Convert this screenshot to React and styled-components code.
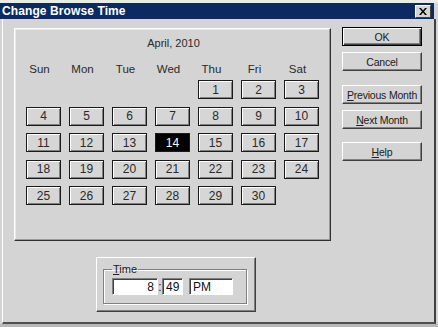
import React from 'react';
import styled, { createGlobalStyle } from 'styled-components';

// Change Browse Time dialog (Win classic look)

const Global = createGlobalStyle`
  html, body {
    margin: 0;
    padding: 0;
    background: #d4d4d4;
  }
  body {
    font-family: "Liberation Sans", Arial, sans-serif;
  }
`;

const days = Array.from({ length: 30 }, (_, i) => i + 1);
const heads = ['Sun', 'Mon', 'Tue', 'Wed', 'Thu', 'Fri', 'Sat'];

const App = () => {
  return (
    <React.Fragment>
      <Global />
      <Window>
        <TopStrip />
        <TitleBar>
          <Title>Change Browse Time</Title>
          <CloseBtn>
            <svg width="8" height="7" viewBox="0 0 8 7">
              <path d="M0 0h2l2 2.5L6 0h2L5 3.5 8 7H6L4 4.5 2 7H0l3-3.5z" fill="#000" />
            </svg>
          </CloseBtn>
        </TitleBar>
        <Body>
          <LeftCol>
            <CalPanel>
              <Month>April, 2010</Month>
              <HeadRow>
                {heads.map((h) => (
                  <Head key={h}>{h}</Head>
                ))}
              </HeadRow>
              <DayGrid>
                {days.map((d) => (
                  <DayBtn key={d} $first={d === 1} $selected={d === 14}>
                    {d}
                  </DayBtn>
                ))}
              </DayGrid>
            </CalPanel>
            <TimeOuter>
              <TimeGroup>
                <TimeLegend>
                  <u>T</u>ime
                </TimeLegend>
                <FieldRow>
                  <Field $w={46} $right>8</Field>
                  <Colon>:</Colon>
                  <Field $w={21}>49</Field>
                  <Field $w={44} $ml={6}>PM</Field>
                </FieldRow>
              </TimeGroup>
            </TimeOuter>
          </LeftCol>
          <RightCol>
            <SideBtn $default>OK</SideBtn>
            <SideBtn $mt={6}>Cancel</SideBtn>
            <SideBtn $mt={14}>
              <u>P</u>revious Month
            </SideBtn>
            <SideBtn $mt={6}>
              <u>N</u>ext Month
            </SideBtn>
            <SideBtn $mt={13}>
              <u>H</u>elp
            </SideBtn>
          </RightCol>
        </Body>
        <BottomStrip />
      </Window>
    </React.Fragment>
  );
};

const Window = styled.div`
  width: 438px;
  height: 327px;
  background: #d4d4d4;
  display: flex;
  flex-direction: column;
  overflow: hidden;
`;

const TopStrip = styled.div`
  height: 3px;
  background: #ecebe6;
`;

const TitleBar = styled.div`
  height: 16px;
  width: 434px;
  background: #0b2a62;
  display: flex;
  align-items: center;
  justify-content: space-between;
`;

const Title = styled.div`
  color: #fff;
  font-weight: bold;
  font-size: 12px;
  padding-left: 2px;
  letter-spacing: 0.1px;
`;

const CloseBtn = styled.div`
  width: 14px;
  height: 11px;
  margin-right: 3px;
  background: #d4d4d4;
  border: 1px solid;
  border-color: #fff #404040 #404040 #fff;
  display: flex;
  align-items: center;
  justify-content: center;
`;

const Body = styled.div`
  flex: 1;
  display: flex;
  align-items: flex-start;
  border-left: 1px solid #fff;
  margin-left: 2px;
  border-right: 2px solid #404040;
  width: 431px;
  border-bottom: 2px solid #505050;
`;

const LeftCol = styled.div`
  padding: 9px 0 0 11px;
  display: flex;
  flex-direction: column;
  align-items: flex-start;
`;

const CalPanel = styled.div`
  border: 1px solid;
  border-color: #fff #303030 #303030 #fff;
  box-shadow: inset -1px -1px #9a9a9a, inset 1px 1px #e8e8e8;
  padding: 8px 0 0 11px;
  box-sizing: border-box;
  width: 317px;
  height: 213px;
  color: #2a2a2a;
`;

const Month = styled.div`
  font-size: 11px;
  line-height: 13px;
  width: 295px;
  text-align: center;
`;

const HeadRow = styled.div`
  display: grid;
  grid-template-columns: repeat(7, 35px);
  column-gap: 8px;
  margin-top: 12px;
`;

const Head = styled.div`
  font-size: 11.5px;
  line-height: 14px;
  text-align: center;
  padding-right: 8px;
  white-space: nowrap;
`;

const DayGrid = styled.div`
  display: grid;
  grid-template-columns: repeat(7, 35px);
  grid-auto-rows: 19px;
  column-gap: 8px;
  row-gap: 7.5px;
  margin-top: 4px;
`;

const DayBtn = styled.div`
  grid-column-start: ${(p) => (p.$first ? 5 : 'auto')};
  box-sizing: border-box;
  border: 1px solid #1a1a1a;
  background: ${(p) => (p.$selected ? '#000' : '#d6d6d6')};
  color: ${(p) => (p.$selected ? '#fff' : '#2a2a2a')};
  box-shadow: ${(p) =>
    p.$selected ? 'none' : 'inset 1px 1px #fff, inset -1px -1px #808080'};
  font-size: 12px;
  display: flex;
  align-items: center;
  justify-content: center;
`;

const TimeOuter = styled.div`
  margin: 16px 0 0 82px;
  width: 160px;
  height: 55px;
  box-sizing: border-box;
  border: 1px solid;
  border-color: #fff #404040 #404040 #fff;
  box-shadow: inset -1px -1px #808080;
  padding: 6px 0 0 6px;
`;

const TimeGroup = styled.fieldset`
  margin: 0;
  width: 144px;
  height: 40px;
  box-sizing: border-box;
  border: 1px solid #808080;
  box-shadow: 1px 1px #fff, inset 1px 1px #fff;
  padding: 0 0 0 8px;
`;

const TimeLegend = styled.legend`
  font-size: 11px;
  color: #202020;
  padding: 0 1px;
  margin-left: 0;
  line-height: 11px;
`;

const FieldRow = styled.div`
  display: flex;
  align-items: center;
  margin-top: 3px;
`;

const Field = styled.div`
  width: ${(p) => p.$w}px;
  height: 17px;
  margin-left: ${(p) => p.$ml || 0}px;
  box-sizing: border-box;
  background: #fff;
  border: 1px solid;
  border-color: #808080 #fff #fff #808080;
  box-shadow: inset 1px 1px #404040;
  font-size: 12px;
  color: #101010;
  display: flex;
  align-items: center;
  justify-content: ${(p) => (p.$right ? 'flex-end' : 'flex-start')};
  padding: 0 3px;
`;

const Colon = styled.span`
  width: 4px;
  font-size: 12px;
  text-align: center;
  color: #202020;
`;

const RightCol = styled.div`
  display: flex;
  flex-direction: column;
  margin-left: 11px;
  padding-top: 8px;
`;

const SideBtn = styled.div`
  width: 80px;
  height: 19px;
  margin-top: ${(p) => p.$mt || 0}px;
  box-sizing: border-box;
  background: #d4d4d4;
  border: 1px solid;
  border-color: ${(p) => (p.$default ? '#000' : '#fff #404040 #404040 #fff')};
  box-shadow: ${(p) =>
    p.$default
      ? 'inset 1px 1px #fff, inset -1px -1px #404040, inset -2px -2px #808080'
      : 'inset -1px -1px #808080'};
  font-size: 10.5px;
  letter-spacing: -0.2px;
  white-space: nowrap;
  color: #202020;
  display: flex;
  align-items: center;
  justify-content: center;
`;

const BottomStrip = styled.div`
  height: 3px;
  background: #b8b8b8;
`;

export default App;
